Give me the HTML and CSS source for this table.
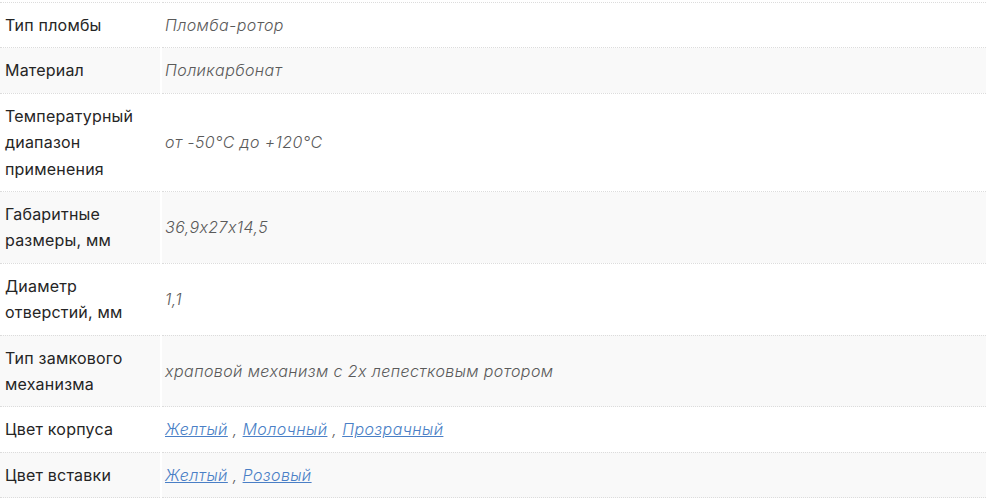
FILE: index.html
```html
<!DOCTYPE html>
<html lang="ru">
<head>
<meta charset="utf-8">
<link rel="stylesheet" href="styles.css">
</head>
<body>
<table class="specs">
  <tbody>
    <tr><td class="label">Тип пломбы</td><td class="value">Пломба-ротор</td></tr>
    <tr><td class="label">Материал</td><td class="value">Поликарбонат</td></tr>
    <tr><td class="label">Температурный диапазон применения</td><td class="value">от -50°C до +120°C</td></tr>
    <tr><td class="label">Габаритные размеры, мм</td><td class="value">36,9x27x14,5</td></tr>
    <tr><td class="label">Диаметр отверстий, мм</td><td class="value">1,1</td></tr>
    <tr><td class="label">Тип замкового механизма</td><td class="value">храповой механизм с 2х лепестковым ротором</td></tr>
    <tr><td class="label">Цвет корпуса</td><td class="value"><a href="#">Желтый</a> , <a href="#">Молочный</a> , <a href="#">Прозрачный</a></td></tr>
    <tr><td class="label">Цвет вставки</td><td class="value"><a href="#">Желтый</a> , <a href="#">Розовый</a></td></tr>
  </tbody>
</table>
</body>
</html>
```
FILE: styles.css
```css
html, body {
  margin: 0;
  padding: 0;
  background: #fff;
}
body {
  padding-top: 2px;
  font-family: Inter, "Noto Sans", sans-serif;
  font-size: 16px;
  line-height: 26.4px;
  color: #222;
  font-feature-settings: "calt" 0;
}
.specs {
  width: 100%;
  border-collapse: collapse;
}
.specs tr {
  border-top: 1px dotted #dcdcdc;
  border-bottom: 1px dotted #dcdcdc;
}
.specs tr:nth-child(even) td {
  background: #f9f9f9;
}
.specs td {
  padding: 9px 5px 9px 5px;
  vertical-align: middle;
}
.specs .label {
  width: 150px;
  border-right: 2px solid #fff;
  color: #252525;
  letter-spacing: 0.2px;
}
.specs .value {
  padding-left: 3px;
  font-style: italic;
  font-weight: 300;
  letter-spacing: 0.4px;
  color: #5a5a5a;
}
.specs a {
  color: #4a7fc6;
  text-decoration: underline;
}
```
